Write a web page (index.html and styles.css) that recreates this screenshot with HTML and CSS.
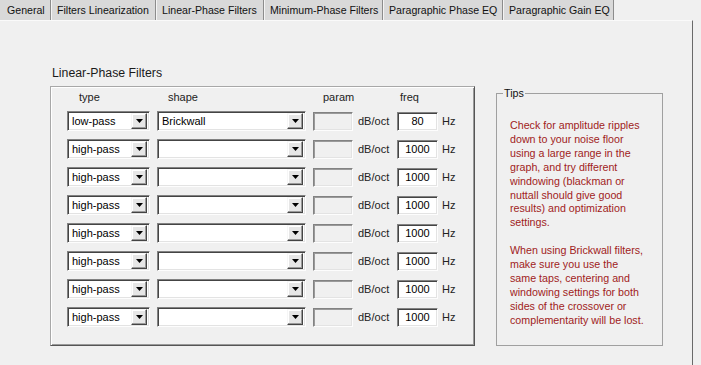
FILE: index.html
```html
<!DOCTYPE html>
<html lang="en">
<head>
    <meta charset="UTF-8">
    <title>Linear-Phase Filters</title>
    <link rel="stylesheet" href="styles.css">
</head>
<body>
    <div class="tabs">
        <div class="tab tab-general">General</div>
        <div class="tab tab-lin">Filters Linearization</div>
        <div class="tab tab-lpf active">Linear-Phase Filters</div>
        <div class="tab tab-mpf">Minimum-Phase Filters</div>
        <div class="tab tab-ppe">Paragraphic Phase EQ</div>
        <div class="tab tab-pge">Paragraphic Gain EQ</div>
    </div>
    <div class="page">
        <div class="filters-col">
            <div class="frame-title">Linear-Phase Filters</div>
            <div class="frame">
                <div class="grid" id="grid">
                    <div class="hdr hdr-type">type</div>
                    <div class="hdr hdr-shape">shape</div>
                    <div class="hdr hdr-param">param</div>
                    <div class="hdr"></div>
                    <div class="hdr hdr-freq">freq</div>
                    <div class="hdr"></div>
                </div>
            </div>
        </div>
        <fieldset class="tips">
            <legend>Tips</legend>
            <p class="tips-first">Check for amplitude ripples<br>down to your noise floor<br>using a large range in the<br>graph, and try different<br>windowing (blackman or<br>nuttall should give good<br>results) and optimization<br>settings.</p>
            <p>When using Brickwall filters,<br>make sure you use the<br>same taps, centering and<br>windowing settings for both<br>sides of the crossover or<br>complementarity will be lost.</p>
        </fieldset>
    </div>
    <script>
        const filters = [
            { type: "low-pass", shape: "Brickwall", freq: 80 },
            { type: "high-pass", shape: "", freq: 1000 },
            { type: "high-pass", shape: "", freq: 1000 },
            { type: "high-pass", shape: "", freq: 1000 },
            { type: "high-pass", shape: "", freq: 1000 },
            { type: "high-pass", shape: "", freq: 1000 },
            { type: "high-pass", shape: "", freq: 1000 },
            { type: "high-pass", shape: "", freq: 1000 }
        ];

        const arrow = '<span class="drop-btn"><svg width="7" height="4" viewBox="0 0 7 4"><path d="M0 0H7L3.5 4Z" fill="#000"/></svg></span>';

        function renderRows() {
            const grid = document.getElementById('grid');
            filters.forEach(f => {
                grid.innerHTML += `
                    <div class="cell"><div class="combo combo-type"><span class="combo-text">${f.type}</span>${arrow}</div></div>
                    <div class="cell"><div class="combo combo-shape"><span class="combo-text">${f.shape}</span>${arrow}</div></div>
                    <div class="cell"><div class="edit edit-param"></div></div>
                    <div class="cell unit">dB/oct</div>
                    <div class="cell"><div class="edit edit-freq">${f.freq}</div></div>
                    <div class="cell unit">Hz</div>
                `;
            });
        }

        renderRows();
    </script>
</body>
</html>
```

FILE: styles.css
```css
body {
    font-family: "Liberation Sans", Arial, sans-serif;
    font-size: 11px;
    margin: 0; padding: 0;
    background: #f0f0f0;
    color: #000;
    width: 701px;
    height: 365px;
    overflow: hidden;
}
.tabs {
    display: flex;
    height: 20px;
}
.tab {
    box-sizing: border-box;
    height: 20px;
    line-height: 20px;
    padding-left: 6px;
    font-size: 10.6px;
    background: #d9d9d9;
    border-right: 1px solid #8c8c8c;
    box-shadow: inset 1px 0 0 #f4f4f4;
    color: #111;
    white-space: nowrap;
    overflow: hidden;
}
.tab-general { width: 51px; padding-left: 7px; box-shadow: none; }
.tab-lin { width: 105px; }
.tab-lpf { width: 108px; }
.tab-mpf { width: 119px; }
.tab-ppe { width: 120px; }
.tab-pge { width: 111px; }
.page {
    box-sizing: border-box;
    width: 693px;
    height: 345px;
    border-right: 1px solid #6a6a6a;
    border-top: 1px solid #fafafa;
    display: flex;
    align-items: flex-start;
}
.filters-col {
    margin-left: 50px;
    margin-top: 45px;
}
.frame-title {
    font-size: 12.3px;
    line-height: 14px;
    height: 14px;
    margin-left: 2px;
    margin-bottom: 6px;
    color: #1a1a1a;
}
.frame {
    box-sizing: border-box;
    width: 425px;
    height: 260px;
    border: 1px solid;
    border-color: #a8a8a8 #555 #555 #a8a8a8;
    box-shadow: inset 1px 1px 0 #fff, inset -1px -1px 0 #9a9a9a;
    padding: 4px 0 0 16px;
}
.grid {
    display: grid;
    grid-template-columns: 90px 156px 45px 39px 45px 30px;
    grid-template-rows: 12px;
    grid-auto-rows: 20px;
    row-gap: 8px;
}
.grid .hdr {
    line-height: 12px;
    color: #222;
}
.hdr-type { padding-left: 12px; }
.hdr-shape { padding-left: 11px; }
.hdr-param { padding-left: 10px; }
.hdr-freq { padding-left: 3px; }
.cell {
    display: flex;
    align-items: center;
}
.unit {
    color: #222;
}
.combo {
    box-sizing: border-box;
    height: 20px;
    background: #fff;
    border-top: 1px solid #828282;
    border-left: 1px solid #828282;
    border-bottom: 1px solid #fdfdfd;
    border-right: 1px solid #fdfdfd;
    box-shadow: inset 1px 1px 0 #444, inset -1px -1px 0 #e3e3e3;
    display: flex;
    align-items: center;
    justify-content: space-between;
    padding: 2px 2px 2px 4px;
}
.combo-type { width: 83px; }
.combo-shape { width: 149px; }
.combo-text {
    white-space: nowrap;
}
.drop-btn {
    box-sizing: border-box;
    width: 16px;
    height: 16px;
    background: #e6e6e6;
    border-top: 1px solid #f6f6f6;
    border-left: 1px solid #f6f6f6;
    border-right: 1px solid #444;
    border-bottom: 1px solid #444;
    box-shadow: inset -1px -1px 0 #9a9a9a, inset 1px 1px 0 #fff;
    display: flex;
    align-items: center;
    justify-content: center;
}
.drop-btn svg {
    display: block;
    margin-left: 1px;
}
.edit {
    box-sizing: border-box;
    height: 19px;
    border-top: 1px solid #828282;
    border-left: 1px solid #828282;
    border-bottom: 1px solid #fdfdfd;
    border-right: 1px solid #fdfdfd;
    box-shadow: inset 1px 1px 0 #444, inset -1px -1px 0 #e3e3e3;
    line-height: 17px;
    text-align: center;
}
.edit-param {
    width: 40px;
    background: #f0f0f0;
    box-shadow: inset 1px 1px 0 #9a9a9a, inset -1px -1px 0 #e3e3e3;
}
.edit-freq {
    width: 41px;
    background: #fff;
}
.tips {
    box-sizing: border-box;
    margin: 65px 0 0 21px;
    width: 167px;
    height: 260px;
    border: 1px solid #a0a0a0;
    padding: 0 0 0 6px;
    color: #a01c1c;
    font-size: 10.7px;
}
.tips legend {
    padding: 0 1px;
    line-height: 14px;
    color: #111;
}
.tips p {
    margin: 14px 0 0 7px;
    line-height: 13.9px;
    white-space: nowrap;
}
.tips .tips-first {
    margin-top: 19px;
}
```
